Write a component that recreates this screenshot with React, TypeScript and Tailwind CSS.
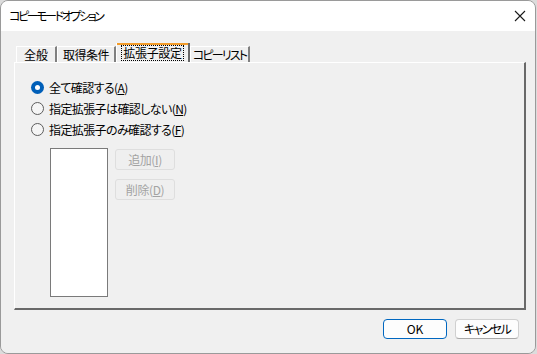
import React from "react";

const font = "[font-family:'Noto_Sans_CJK_JP','Noto_Sans',sans-serif] [font-feature-settings:'palt']";

function Radio({ checked, label, keyChar }: { checked?: boolean; label: string; keyChar: string }) {
  return (
    <div className="flex h-[21px] items-center">
      {checked ? (
        <span className="flex h-[13px] w-[13px] shrink-0 items-center justify-center rounded-full bg-[#005fb8]">
          <span className="h-[5px] w-[5px] rounded-full bg-white" />
        </span>
      ) : (
        <span className="h-[13px] w-[13px] shrink-0 rounded-full border border-[#5d5d5d] bg-[#f5f5f5]" />
      )}
      <span className="ml-[5px] whitespace-nowrap text-[12px] leading-none tracking-[-0.6px] text-black">
        {label}(<u>{keyChar}</u>)
      </span>
    </div>
  );
}

function Tab({ label, width, tracking, selected }: { label: string; width: string; tracking: string; selected?: boolean }) {
  if (selected) {
    return (
      <div className={`${width} flex h-[19px] shrink-0 flex-col border-l border-l-white border-r-2 border-r-[#696969]`}>
        <div className="h-[2px] bg-[#f39c2a]" />
        <div className="flex flex-1 items-center justify-center px-[3px] pb-[1px]">
          <span className={`whitespace-nowrap border border-dotted border-black px-[1px] text-[12px] leading-[14px] text-black ${tracking}`}>
            {label}
          </span>
        </div>
      </div>
    );
  }
  return (
    <div
      className={`${width} ${tracking} flex h-[16px] shrink-0 items-center justify-center whitespace-nowrap border-t border-t-white border-l border-l-white border-r-2 border-r-[#808080] text-[12px] leading-none text-black`}
    >
      {label}
    </div>
  );
}

function SmallButton({ children }: { children: React.ReactNode }) {
  return (
    <div className="flex h-[21px] w-[60px] items-center justify-center rounded-[3px] border border-[#dedede] bg-[#efefef] text-[12px] leading-none tracking-[-0.4px] text-[#a3a3a3]">
      {children}
    </div>
  );
}

export default function App() {
  return (
    <div className={`h-[354px] w-[537px] bg-[#dcdcdc] ${font}`}>
      <div className="flex h-[354px] w-[536px] flex-col overflow-hidden rounded-[8px] border border-[#9a9a9a]">
        {/* title bar */}
        <div className="flex h-[30px] items-center justify-between bg-white pl-[8px] pr-[9px]">
          <span className="whitespace-nowrap text-[12px] leading-none tracking-[-2.4px] text-black">コピーモードオプション</span>
          <svg width="12" height="12" viewBox="0 0 12 12">
            <path d="M1 1 L11 11 M11 1 L1 11" stroke="#1a1a1a" strokeWidth="1.1" />
          </svg>
        </div>

        {/* body */}
        <div className="flex flex-1 flex-col bg-[#f0f0f0] px-[13px] pt-[13px]">
          <div className="flex h-[18px] items-end pl-[2px]">
            <Tab label="全般" width="w-[41px]" tracking="tracking-[0px]" />
            <Tab label="取得条件" width="w-[59px]" tracking="tracking-[-0.5px]" />
            <Tab label="拡張子設定" width="w-[74px]" tracking="tracking-[-0.3px]" selected />
            <Tab label="コピーリスト" width="w-[60px]" tracking="tracking-[-1.8px]" />
          </div>

          <div className="flex h-[248px] w-[512px] flex-col border-t border-t-white border-l border-l-white border-r-2 border-r-[#696969] border-b-2 border-b-[#696969] pl-[16px] pt-[14px]">
            <Radio checked label="全て確認する" keyChar="A" />
            <Radio label="指定拡張子は確認しない" keyChar="N" />
            <Radio label="指定拡張子のみ確認する" keyChar="F" />

            <div className="mt-[8px] flex pl-[19px]">
              <div className="h-[149px] w-[58px] border border-[#7a7a7a] bg-white" />
              <div className="ml-[7px] flex flex-col gap-[9px] pt-[1px]">
                <SmallButton>
                  追加(<u>I</u>)
                </SmallButton>
                <SmallButton>
                  削除(<u>D</u>)
                </SmallButton>
              </div>
            </div>
          </div>

          <div className="flex justify-end gap-[8px] pr-[3px] pt-[9px]">
            <div className="flex h-[20px] w-[64px] items-center justify-center rounded-[4px] border border-[#0067c0] bg-[#fdfdfd] text-[12px] leading-none text-black">
              OK
            </div>
            <div className="flex h-[20px] w-[64px] items-center justify-center whitespace-nowrap rounded-[4px] border border-[#d0d0d0] border-b-[#a8a8a8] bg-[#fdfdfd] text-[12px] leading-none tracking-[-1.6px] text-black">
              キャンセル
            </div>
          </div>
        </div>
      </div>
    </div>
  );
}
